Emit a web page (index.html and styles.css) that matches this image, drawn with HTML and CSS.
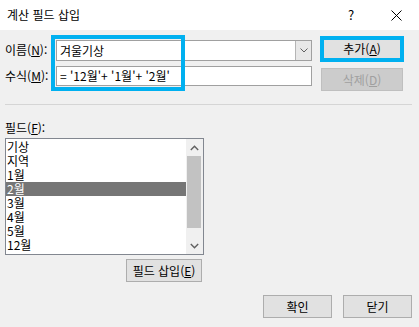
FILE: index.html
```html
<!DOCTYPE html>
<html lang="ko">
<head>
<meta charset="utf-8">
<link rel="stylesheet" href="styles.css">
</head>
<body>
<div class="win">
  <div class="titlebar">
    <span class="title">계산 필드 삽입</span>
    <span class="help">?</span>
    <span class="close"><svg width="11" height="11" viewBox="0 0 11 11"><path d="M0.5 0.5 L10.5 10.5 M10.5 0.5 L0.5 10.5" stroke="#000" stroke-width="1" fill="none"/></svg></span>
  </div>
  <div class="content">
    <div class="form">
      <div class="lbl r1">이름(<u>N</u>):</div>
      <div class="combo"><span class="val">겨울기상</span><span class="drop"><svg width="8" height="5" viewBox="0 0 8 5"><path d="M0.5 0.5 L4 4 L7.5 0.5" stroke="#606060" fill="none"/></svg></span></div>
      <button class="btn add">추가(<u>A</u>)</button>
      <div class="lbl r2">수식(<u>M</u>):</div>
      <div class="field">= '12월'+ '1월'+ '2월'</div>
      <button class="btn del" disabled>삭제(<u>D</u>)</button>
    </div>
    <div class="sep"></div>
    <div class="flabel">필드(<u>F</u>):</div>
    <div class="listbox">
      <div class="items">
        <div class="item">기상</div>
        <div class="item">지역</div>
        <div class="item">1월</div>
        <div class="item sel">2월</div>
        <div class="item">3월</div>
        <div class="item">4월</div>
        <div class="item">5월</div>
        <div class="item">12월</div>
      </div>
      <div class="scroll">
        <div class="arrow"><svg width="9" height="6" viewBox="0 0 9 6"><path d="M0.8 5 L4.5 1.3 L8.2 5" stroke="#606060" stroke-width="1.4" fill="none"/></svg></div>
        <div class="thumb"></div>
        <div class="arrow down"><svg width="9" height="6" viewBox="0 0 9 6"><path d="M0.8 1 L4.5 4.7 L8.2 1" stroke="#606060" stroke-width="1.4" fill="none"/></svg></div>
      </div>
    </div>
    <div class="insert-row"><button class="btn insert">필드 삽입(<u>E</u>)</button></div>
    <div class="footer">
      <button class="btn foot">확인</button>
      <button class="btn foot">닫기</button>
    </div>
  </div>
  <div class="highlight"></div>
</div>
</body>
</html>
```

FILE: styles.css
```css
* { box-sizing: border-box; }
html, body { margin: 0; padding: 0; }
body {
  width: 419px;
  height: 327px;
  overflow: hidden;
  background: #f0f0f0;
  font-family: "Noto Sans CJK KR", "Noto Sans", sans-serif;
  font-size: 12px;
  color: #000;
}
.win { position: relative; width: 419px; height: 327px; }
.titlebar {
  height: 30px;
  background: #fff;
  display: flex;
  align-items: center;
  padding-left: 7px;
}
.title { font-size: 12px; line-height: 16px; }
.help { margin-left: auto; width: 12px; text-align: center; font-size: 13px; line-height: 16px; }
.close { width: 11px; height: 11px; margin-left: 34px; margin-right: 17px; display: flex; }
.content { padding-top: 6px; }
.form {
  display: grid;
  grid-template-columns: 51px 256px 92px;
  grid-template-rows: 26px 29px;
  padding-left: 5px;
}
.lbl { line-height: 16px; white-space: nowrap; }
.lbl.r1 { align-self: center; margin-top: 2px; }
.lbl.r2 { margin-top: 6px; }
.combo {
  margin-top: 4px;
  height: 21px;
  background: #fff;
  border: 1px solid #a0a0a0;
  display: flex;
  align-items: stretch;
}
.combo .val { flex: 1; padding-left: 3px; line-height: 19px; }
.combo .drop {
  width: 16px;
  background: #e8e8e8;
  border-left: 1px solid #b5b5b5;
  display: flex;
  align-items: center;
  justify-content: center;
}
.field {
  margin-top: 4px;
  height: 20px;
  background: #fff;
  border: 1px solid #a0a0a0;
  padding-left: 3px;
  line-height: 18px;
  white-space: nowrap;
}
.btn {
  font-family: inherit;
  font-size: 12px;
  color: #000;
  background: #e1e1e1;
  border: 1px solid #adadad;
  padding: 0;
  margin: 0;
  line-height: 16px;
}
.btn.add {
  justify-self: end;
  width: 84px;
  height: 26px;
  border: 4px solid #00b0f0;
}
.btn.del {
  justify-self: end;
  margin-right: 1px;
  margin-top: 6px;
  width: 82px;
  height: 23px;
  background: #cccccc;
  border-color: #bfbfbf;
  color: #a0a0a0;
}
.sep {
  margin: 13px 7px 0 5px;
  height: 1px;
  background: #d5d5d5;
}
.flabel { margin-top: 15px; padding-left: 5px; line-height: 16px; }
.listbox {
  margin: 2px 0 0 5px;
  width: 199px;
  height: 117px;
  background: #fff;
  border: 1px solid #828790;
  display: flex;
}
.items { flex: 1; padding-top: 1px; overflow: hidden; }
.item { height: 14px; line-height: 14px; padding-left: 1px; white-space: nowrap; }
.item.sel { background: #767676; color: #fff; }
.scroll {
  width: 17px;
  background: #f0f0f0;
  display: flex;
  flex-direction: column;
}
.arrow { height: 17px; display: flex; align-items: center; justify-content: center; }
.thumb { height: 72px; margin: 0 2px 0 1px; background: #c2c2c2; }
.arrow.down { margin-top: auto; }
.insert-row { margin-top: 4px; padding-left: 126px; }
.btn.insert { width: 76px; height: 23px; }
.footer {
  margin-top: 13px;
  display: flex;
  justify-content: flex-end;
  gap: 11px;
  padding-right: 7px;
}
.btn.foot { width: 69px; height: 23px; }
.highlight {
  position: absolute;
  left: 51px;
  top: 35px;
  width: 134px;
  height: 56px;
  border: 4px solid #00b0f0;
  pointer-events: none;
}
```
